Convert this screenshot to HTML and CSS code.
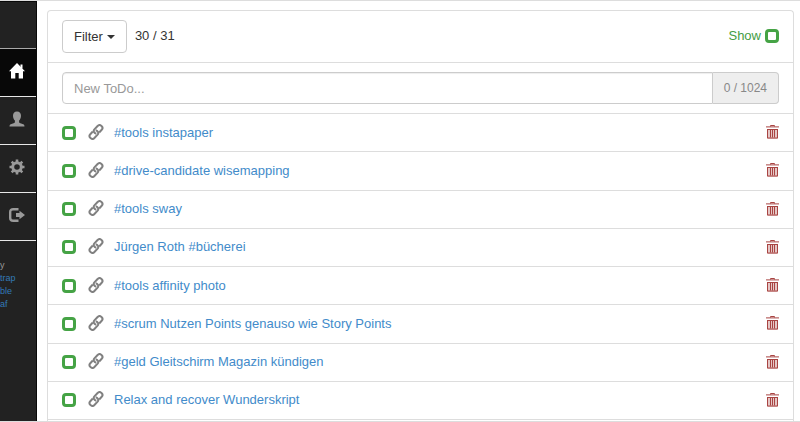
FILE: index.html
```html
<!DOCTYPE html>
<html lang="en">
<head>
<meta charset="utf-8">
<title>ToDo</title>
<link rel="stylesheet" href="styles.css">
</head>
<body>
<svg class="defs" aria-hidden="true">
  <symbol id="link" viewBox="0 0 16 16">
    <g fill="none" stroke="currentColor" stroke-width="2" stroke-linejoin="round">
      <path d="M8.300 9.700C5.800 9 5 7 6.400 5.400L9.600 2C10.800.8 12.300.8 13.500 1.900C14.800 3.100 14.800 4.600 13.700 5.800L11.200 8.500"/>
      <path d="M7.700 6.300C10.200 7 11 9 9.600 10.600L6.400 14C5.200 15.200 3.700 15.200 2.500 14.100C1.200 12.900 1.200 11.400 2.300 10.200L4.800 7.500"/>
    </g>
  </symbol>
  <symbol id="trash" viewBox="0 0 13 15">
    <path fill="currentColor" fill-opacity=".3" d="M1 5h11v10H1z"/>
    <path fill="none" stroke="currentColor" d="M4.500 2.500v-1h4v1M0 2.900h13M1 5.500h11M1.500 5v9h10V5M4.500 5.500v8M6.500 5.500v8M8.500 5.500v8"/>
  </symbol>
</svg>
<div class="app">
  <nav class="sidebar" aria-label="Main">
    <div class="brand"></div>
    <a class="nav-item active" href="#home" aria-label="Home"><svg width="16" height="16" viewBox="0 0 16 16"><path fill="currentColor" d="M8 0l8 8.300h-2V15.500H9.700V10H6.300v5.500H2V8.300H0L8 0z"/><path fill="currentColor" d="M11.500 1.500h2v4h-2z"/></svg></a>
    <a class="nav-item" href="#user" aria-label="User"><svg width="16" height="16" viewBox="0 0 16 16"><path fill="currentColor" d="M8 .5c2.700 0 4 1.900 4 4.300 0 2-.8 3.800-1.900 4.800v1.300c0 .6.500.9 1.300 1.300l2.800 1.100c.9.400 1.300 1 1.300 2.200H.5c0-1.200.4-1.800 1.300-2.200l2.800-1.100c.8-.4 1.300-.7 1.300-1.300V9.600C4.800 8.600 4 6.800 4 4.800 4 2.400 5.300.5 8 .5z"/></svg></a>
    <a class="nav-item" href="#settings" aria-label="Settings"><svg width="16" height="16" viewBox="0 0 16 16"><circle cx="8" cy="8" r="4.300" fill="none" stroke="currentColor" stroke-width="3"/><path stroke="currentColor" stroke-width="2.600" d="M8 .5v3M8 12.500v3M.5 8h3M12.500 8h3M2.700 2.700l2.100 2.100M11.200 11.200l2.100 2.100M2.700 13.300l2.100-2.100M11.200 4.800l2.100-2.100"/></svg></a>
    <a class="nav-item" href="#logout" aria-label="Log out"><svg width="16" height="16" viewBox="0 0 16 16"><path fill="none" stroke="currentColor" stroke-width="2.400" d="M9.500 2.200H4.200C2.300 2.200 1.200 3.200 1.200 5v6c0 1.800 1.100 2.800 3 2.800h5.300"/><path fill="currentColor" d="M10.500 3.800L16 8l-5.500 4.200V9.900H7V6.100h3.500z"/></svg></a>
    <div class="credits"><span>y</span><a href="#trap">trap</a><a href="#ble">ble</a><a href="#af">af</a></div>
  </nav>
  <main class="panel">
    <header class="toolbar">
      <button class="filter" type="button">Filter <i class="caret"></i></button>
      <span class="count">30 / 31</span>
      <label class="show">Show <input class="check" type="checkbox"></label>
    </header>
    <form class="entry">
      <input class="entry-text" type="text" placeholder="New ToDo..." aria-label="New ToDo">
      <span class="entry-count">0 / 1024</span>
    </form>
    <ul class="list">
      <li><input class="check" type="checkbox" aria-label="Done"><svg class="link"><use href="#link"/></svg><a href="#1">#tools instapaper</a><button class="del" type="button" aria-label="Delete"><svg><use href="#trash"/></svg></button></li>
      <li><input class="check" type="checkbox" aria-label="Done"><svg class="link"><use href="#link"/></svg><a href="#2">#drive-candidate wisemapping</a><button class="del" type="button" aria-label="Delete"><svg><use href="#trash"/></svg></button></li>
      <li><input class="check" type="checkbox" aria-label="Done"><svg class="link"><use href="#link"/></svg><a href="#3">#tools sway</a><button class="del" type="button" aria-label="Delete"><svg><use href="#trash"/></svg></button></li>
      <li><input class="check" type="checkbox" aria-label="Done"><svg class="link"><use href="#link"/></svg><a href="#4">Jürgen Roth #bücherei</a><button class="del" type="button" aria-label="Delete"><svg><use href="#trash"/></svg></button></li>
      <li><input class="check" type="checkbox" aria-label="Done"><svg class="link"><use href="#link"/></svg><a href="#5">#tools affinity photo</a><button class="del" type="button" aria-label="Delete"><svg><use href="#trash"/></svg></button></li>
      <li><input class="check" type="checkbox" aria-label="Done"><svg class="link"><use href="#link"/></svg><a href="#6">#scrum Nutzen Points genauso wie Story Points</a><button class="del" type="button" aria-label="Delete"><svg><use href="#trash"/></svg></button></li>
      <li><input class="check" type="checkbox" aria-label="Done"><svg class="link"><use href="#link"/></svg><a href="#7">#geld Gleitschirm Magazin kündigen</a><button class="del" type="button" aria-label="Delete"><svg><use href="#trash"/></svg></button></li>
      <li><input class="check" type="checkbox" aria-label="Done"><svg class="link"><use href="#link"/></svg><a href="#8">Relax and recover Wunderskript</a><button class="del" type="button" aria-label="Delete"><svg><use href="#trash"/></svg></button></li>
    </ul>
  </main>
</div>
</body>
</html>
```
FILE: styles.css
```css
* { box-sizing: border-box; }
body {
  margin: 0;
  background: #fff;
  color: #333;
  font: 13px/20px "Liberation Sans", Arial, sans-serif;
}
a { color: #428bca; text-decoration: none; }
button, input { font: inherit; }
svg { display: block; }
.defs { position: absolute; width: 0; height: 0; }

.app {
  display: flex;
  min-height: 100vh;
  border-top: 1px solid #ddd;
  border-bottom: 1px solid #ddd;
}

.sidebar {
  flex: none;
  width: 37px;
  background: #222;
  border-right: 1px solid #080808;
  border-top: 1px solid #080808;
}
.brand { height: 47px; border-bottom: 1px solid #aaa; }
.nav-item {
  display: flex;
  align-items: center;
  height: 48px;
  padding: 0 0 3px 9px;
  color: #999;
  border-bottom: 1px solid #e7e7e7;
}
.nav-item.active { background: #080808; color: #fff; }
.credits {
  display: flex;
  flex-direction: column;
  margin-top: 18px;
  color: #999;
  font-size: 9px;
  line-height: 13px;
}
.credits a { color: #337ab7; }

.panel {
  flex: 1;
  display: flex;
  flex-direction: column;
  margin: 9px 6px 0 10px;
  border: 1px solid #ddd;
  border-bottom: 0;
  border-radius: 4px 4px 0 0;
}
.toolbar {
  display: flex;
  align-items: flex-start;
  padding: 9px 14px;
  border-bottom: 1px solid #ddd;
}
.filter {
  display: flex;
  align-items: center;
  gap: 4px;
  height: 33px;
  padding: 0 11px;
  background: #fff;
  border: 1px solid #ccc;
  border-radius: 4px;
  color: #333;
}
.caret {
  border: 4px solid transparent;
  border-top-color: #333;
  border-bottom: 0;
}
.count, .show { line-height: 32px; }
.count { margin-left: 8px; }
.show {
  display: flex;
  align-items: center;
  gap: 4px;
  margin-left: auto;
  color: #449d44;
}
.check {
  appearance: none;
  flex: none;
  width: 14px;
  height: 14px;
  margin: 0;
  border: 3px solid #45a345;
  border-radius: 4px;
  background: #fff;
}

.entry {
  display: flex;
  margin: 0;
  padding: 9px 14px;
  border-bottom: 1px solid #ddd;
}
.entry-text {
  flex: 1;
  min-width: 0;
  height: 32px;
  padding: 0 11px;
  border: 1px solid #ccc;
  border-radius: 4px 0 0 4px;
  box-shadow: inset 0 1px 1px rgba(0, 0, 0, .07);
}
.entry-text::placeholder { color: #999; opacity: 1; }
.entry-count {
  padding: 0 11px;
  background: #eee;
  border: 1px solid #ccc;
  border-left: 0;
  border-radius: 0 4px 4px 0;
  color: #888;
  font-size: 12px;
  line-height: 30px;
}

.list {
  flex: 1;
  display: grid;
  grid-auto-rows: 1fr;
  margin: 0 0 1px;
  padding: 0;
  list-style: none;
}
.list li {
  display: flex;
  align-items: center;
  min-height: 38px;
  padding: 0 14px;
  border-bottom: 1px solid #ddd;
}
.link { width: 16px; height: 16px; margin: 0 10px 2px 12px; color: #808080; }
.del {
  margin: 0 0 2px auto;
  padding: 0;
  border: 0;
  background: none;
  color: #a94442;
}
.del svg { width: 13px; height: 15px; }
```
